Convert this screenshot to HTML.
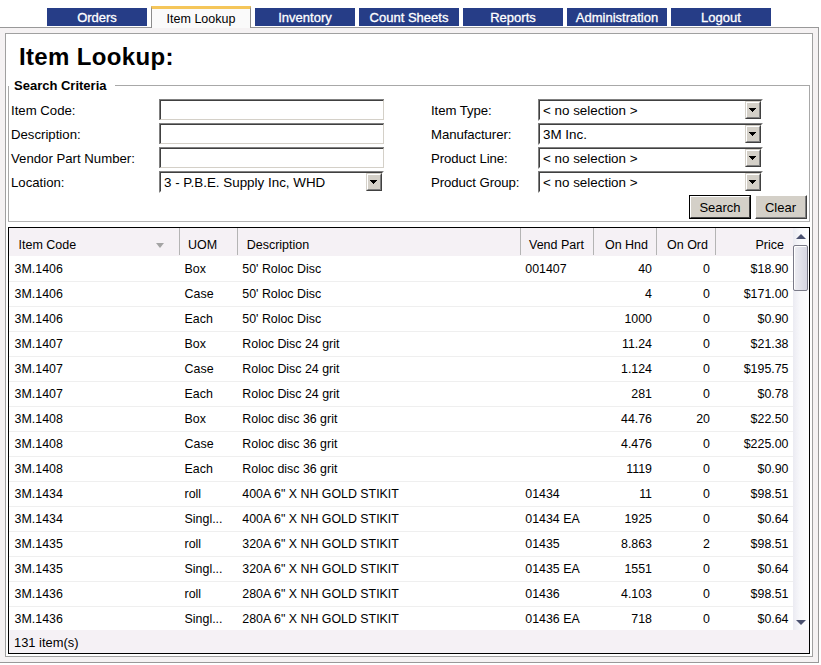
<!DOCTYPE html>
<html><head><meta charset="utf-8">
<style>
*{box-sizing:border-box;margin:0;padding:0}
html,body{width:821px;height:665px;overflow:hidden;background:#fff;font-family:"Liberation Sans",sans-serif;color:#000}
.a{position:absolute}
.tab{position:absolute;top:8px;width:100px;height:18px;background:#263d87;color:#fff;font-size:13px;line-height:20px;text-align:center;-webkit-text-stroke:0.3px #fff}
.atab{position:absolute;left:151px;top:6px;width:100px;height:22px;border-left:1px solid #8c8c8c;border-right:1px solid #8c8c8c;border-top:3px solid #f5c65a;background:#fafafa;font-size:12.5px;text-align:center;line-height:21px}
#outer{position:absolute;left:-1px;top:27px;width:820px;height:636px;border:1px solid #999;background:#f5f2f3}
#panel{position:absolute;left:5px;top:33px;width:808px;height:624px;border:1px solid #a0a0a0;background:#fff}
.lbl{position:absolute;font-size:13.2px;line-height:15px;white-space:nowrap}
.inp{position:absolute;width:225px;height:21px;border-top:2px solid #404040;border-left:2px solid #404040;border-right:1px solid #d4d0c8;border-bottom:1px solid #d4d0c8;background:#fff}
.inp:after{content:"";position:absolute;left:-2px;top:-2px;width:225px;height:1px;background:#808080}
.inp:before{content:"";position:absolute;left:-2px;top:-2px;width:1px;height:21px;background:#808080}
.sel{position:absolute;width:225px;height:22px;border-top:2px solid #404040;border-left:2px solid #404040;border-right:2px solid #fff;border-bottom:2px solid #fff;background:#fff}
.sel:after{content:"";position:absolute;left:-2px;top:-2px;right:-2px;bottom:-2px;border-top:1px solid #808080;border-left:1px solid #808080;border-right:1px solid #fff;border-bottom:1px solid #fff}
.sel .t{position:absolute;left:3px;top:2px;font-size:13.4px;line-height:16px;white-space:nowrap}
.sel .b{position:absolute;right:0;top:0;width:16px;height:18px;background:#d4d0c8;border-top:1px solid #d4d0c8;border-left:1px solid #d4d0c8;border-right:1px solid #404040;border-bottom:1px solid #404040}
.sel .b:before{content:"";position:absolute;left:0;top:0;right:0;bottom:0;border-top:1px solid #fff;border-left:1px solid #fff;border-right:1px solid #808080;border-bottom:1px solid #808080}
.sel .b svg{position:absolute;left:3px;top:6px}
.btn{position:absolute;background:#d4d0c8;font-size:13px;text-align:center}
.bi{position:absolute;left:0;top:0;right:0;bottom:0;border-top:1px solid #fff;border-left:1px solid #fff;border-right:1px solid #404040;border-bottom:1px solid #404040}
.bi2{position:absolute;left:0;top:0;right:0;bottom:0;border-right:1px solid #808080;border-bottom:1px solid #808080}
#grid{position:absolute;left:8px;top:227px;width:802px;height:427px;border:1px solid #000;background:#fff;overflow:hidden}
.hd{position:absolute;top:0;height:28px;background:#f5f1f5;left:0;width:785px}
.hc{position:absolute;top:4px;height:27px;font-size:12.5px;line-height:27px;white-space:nowrap}
.sep{position:absolute;top:0;height:27px;width:1px;background:#b4b4b4}
.row{position:absolute;left:0;width:785px;height:25px;border-bottom:1px solid #efefef}
.c{position:absolute;top:0;font-size:12.4px;line-height:25px;white-space:nowrap}
.r{text-align:right}
</style></head><body>
<div class="tab" style="left:47px">Orders</div>
<div class="tab" style="left:255px">Inventory</div>
<div class="tab" style="left:359px">Count Sheets</div>
<div class="tab" style="left:463px">Reports</div>
<div class="tab" style="left:567px">Administration</div>
<div class="tab" style="left:671px">Logout</div>
<div id="outer"></div>
<div class="atab">Item Lookup</div>
<div id="panel"></div>

<div class="a" style="left:19px;top:42px;font-size:24px;font-weight:bold;line-height:30px;letter-spacing:0.35px">Item Lookup:</div>

<!-- fieldset -->
<div class="a" style="left:8px;top:86px;width:1px;height:136px;background:#a8a8a8"></div>
<div class="a" style="left:115px;top:85px;width:695px;height:1px;background:#a8a8a8"></div>
<div class="a" style="left:809px;top:85px;width:1px;height:137px;background:#a8a8a8"></div>
<div class="a" style="left:8px;top:221px;width:802px;height:1px;background:#b4b4b4"></div>
<div class="a" style="left:14px;top:78px;font-size:13px;font-weight:bold;line-height:15px">Search Criteria</div>

<div class="lbl" style="left:11px;top:102.5px">Item Code:</div>
<div class="lbl" style="left:11px;top:126.5px">Description:</div>
<div class="lbl" style="left:11px;top:150.5px">Vendor Part Number:</div>
<div class="lbl" style="left:11px;top:174.5px">Location:</div>

<div class="inp" style="left:159px;top:99px"></div>
<div class="inp" style="left:159px;top:123px"></div>
<div class="inp" style="left:159px;top:147px"></div>
<div class="sel" style="left:159px;top:171px"><div class="t">3 - P.B.E. Supply Inc, WHD</div><div class="b"><svg width="7" height="4" shape-rendering="crispEdges"><path d="M0 0h7v1h-1v1h-1v1h-1v1h-1v-1h-1v-1h-1v-1h-1z" fill="#000"/></svg></div></div>

<div class="lbl" style="letter-spacing:-0.08px;left:431px;top:102.5px">Item Type:</div>
<div class="lbl" style="letter-spacing:-0.08px;left:431px;top:126.5px">Manufacturer:</div>
<div class="lbl" style="letter-spacing:-0.08px;left:431px;top:150.5px">Product Line:</div>
<div class="lbl" style="letter-spacing:-0.08px;left:431px;top:174.5px">Product Group:</div>

<div class="sel" style="left:538px;top:99px"><div class="t">&lt; no selection &gt;</div><div class="b"><svg width="7" height="4" shape-rendering="crispEdges"><path d="M0 0h7v1h-1v1h-1v1h-1v1h-1v-1h-1v-1h-1v-1h-1z" fill="#000"/></svg></div></div>
<div class="sel" style="left:538px;top:123px"><div class="t">3M Inc.</div><div class="b"><svg width="7" height="4" shape-rendering="crispEdges"><path d="M0 0h7v1h-1v1h-1v1h-1v1h-1v-1h-1v-1h-1v-1h-1z" fill="#000"/></svg></div></div>
<div class="sel" style="left:538px;top:147px"><div class="t">&lt; no selection &gt;</div><div class="b"><svg width="7" height="4" shape-rendering="crispEdges"><path d="M0 0h7v1h-1v1h-1v1h-1v1h-1v-1h-1v-1h-1v-1h-1z" fill="#000"/></svg></div></div>
<div class="sel" style="left:538px;top:171px"><div class="t">&lt; no selection &gt;</div><div class="b"><svg width="7" height="4" shape-rendering="crispEdges"><path d="M0 0h7v1h-1v1h-1v1h-1v1h-1v-1h-1v-1h-1v-1h-1z" fill="#000"/></svg></div></div>

<div class="btn" style="left:689px;top:195px;width:62px;height:24px;border:1px solid #000"><div class="bi" style="line-height:22px">Search</div></div>
<div class="btn" style="left:755px;top:195px;width:52px;height:24px;border-top:1px solid #fff;border-left:1px solid #fff;border-right:1px solid #404040;border-bottom:1px solid #404040"><div class="bi2" style="line-height:24px">Clear</div></div>

<div id="grid">
<div class="hd"></div>
<div class="sep" style="left:170px"></div>
<div class="sep" style="left:228px"></div>
<div class="sep" style="left:511px"></div>
<div class="sep" style="left:584px"></div>
<div class="sep" style="left:647px"></div>
<div class="sep" style="left:706px"></div>
<div class="hc" style="left:9.5px">Item Code</div>
<div class="hc" style="left:179px">UOM</div>
<div class="hc" style="left:237.7px">Description</div>
<div class="hc" style="left:520px">Vend Part</div>
<div class="hc r" style="right:161px">On Hnd</div>
<div class="hc r" style="right:101px">On Ord</div>
<div class="hc r" style="right:25px">Price</div>
<div class="a" style="left:147px;top:15px;width:0;height:0;border-left:4.5px solid transparent;border-right:4.5px solid transparent;border-top:5px solid #a4a4a4"></div>
<div class="row" style="top:29px"><div class="c" style="left:5.6px">3M.1406</div><div class="c" style="left:175.6px">Box</div><div class="c" style="left:233.3px">50' Roloc Disc</div><div class="c" style="left:516.3px">001407</div><div class="c r" style="right:142px">40</div><div class="c r" style="right:84px">0</div><div class="c r" style="right:5.5px">$18.90</div></div>
<div class="row" style="top:54px"><div class="c" style="left:5.6px">3M.1406</div><div class="c" style="left:175.6px">Case</div><div class="c" style="left:233.3px">50' Roloc Disc</div><div class="c r" style="right:142px">4</div><div class="c r" style="right:84px">0</div><div class="c r" style="right:5.5px">$171.00</div></div>
<div class="row" style="top:79px"><div class="c" style="left:5.6px">3M.1406</div><div class="c" style="left:175.6px">Each</div><div class="c" style="left:233.3px">50' Roloc Disc</div><div class="c r" style="right:142px">1000</div><div class="c r" style="right:84px">0</div><div class="c r" style="right:5.5px">$0.90</div></div>
<div class="row" style="top:104px"><div class="c" style="left:5.6px">3M.1407</div><div class="c" style="left:175.6px">Box</div><div class="c" style="left:233.3px">Roloc Disc 24 grit</div><div class="c r" style="right:142px">11.24</div><div class="c r" style="right:84px">0</div><div class="c r" style="right:5.5px">$21.38</div></div>
<div class="row" style="top:129px"><div class="c" style="left:5.6px">3M.1407</div><div class="c" style="left:175.6px">Case</div><div class="c" style="left:233.3px">Roloc Disc 24 grit</div><div class="c r" style="right:142px">1.124</div><div class="c r" style="right:84px">0</div><div class="c r" style="right:5.5px">$195.75</div></div>
<div class="row" style="top:154px"><div class="c" style="left:5.6px">3M.1407</div><div class="c" style="left:175.6px">Each</div><div class="c" style="left:233.3px">Roloc Disc 24 grit</div><div class="c r" style="right:142px">281</div><div class="c r" style="right:84px">0</div><div class="c r" style="right:5.5px">$0.78</div></div>
<div class="row" style="top:179px"><div class="c" style="left:5.6px">3M.1408</div><div class="c" style="left:175.6px">Box</div><div class="c" style="left:233.3px">Roloc disc 36 grit</div><div class="c r" style="right:142px">44.76</div><div class="c r" style="right:84px">20</div><div class="c r" style="right:5.5px">$22.50</div></div>
<div class="row" style="top:204px"><div class="c" style="left:5.6px">3M.1408</div><div class="c" style="left:175.6px">Case</div><div class="c" style="left:233.3px">Roloc disc 36 grit</div><div class="c r" style="right:142px">4.476</div><div class="c r" style="right:84px">0</div><div class="c r" style="right:5.5px">$225.00</div></div>
<div class="row" style="top:229px"><div class="c" style="left:5.6px">3M.1408</div><div class="c" style="left:175.6px">Each</div><div class="c" style="left:233.3px">Roloc disc 36 grit</div><div class="c r" style="right:142px">1119</div><div class="c r" style="right:84px">0</div><div class="c r" style="right:5.5px">$0.90</div></div>
<div class="row" style="top:254px"><div class="c" style="left:5.6px">3M.1434</div><div class="c" style="left:175.6px">roll</div><div class="c" style="left:233.3px">400A 6&quot; X NH GOLD STIKIT</div><div class="c" style="left:516.3px">01434</div><div class="c r" style="right:142px">11</div><div class="c r" style="right:84px">0</div><div class="c r" style="right:5.5px">$98.51</div></div>
<div class="row" style="top:279px"><div class="c" style="left:5.6px">3M.1434</div><div class="c" style="left:175.6px">Singl...</div><div class="c" style="left:233.3px">400A 6&quot; X NH GOLD STIKIT</div><div class="c" style="left:516.3px">01434 EA</div><div class="c r" style="right:142px">1925</div><div class="c r" style="right:84px">0</div><div class="c r" style="right:5.5px">$0.64</div></div>
<div class="row" style="top:304px"><div class="c" style="left:5.6px">3M.1435</div><div class="c" style="left:175.6px">roll</div><div class="c" style="left:233.3px">320A 6&quot; X NH GOLD STIKIT</div><div class="c" style="left:516.3px">01435</div><div class="c r" style="right:142px">8.863</div><div class="c r" style="right:84px">2</div><div class="c r" style="right:5.5px">$98.51</div></div>
<div class="row" style="top:329px"><div class="c" style="left:5.6px">3M.1435</div><div class="c" style="left:175.6px">Singl...</div><div class="c" style="left:233.3px">320A 6&quot; X NH GOLD STIKIT</div><div class="c" style="left:516.3px">01435 EA</div><div class="c r" style="right:142px">1551</div><div class="c r" style="right:84px">0</div><div class="c r" style="right:5.5px">$0.64</div></div>
<div class="row" style="top:354px"><div class="c" style="left:5.6px">3M.1436</div><div class="c" style="left:175.6px">roll</div><div class="c" style="left:233.3px">280A 6&quot; X NH GOLD STIKIT</div><div class="c" style="left:516.3px">01436</div><div class="c r" style="right:142px">4.103</div><div class="c r" style="right:84px">0</div><div class="c r" style="right:5.5px">$98.51</div></div>
<div class="row" style="top:379px"><div class="c" style="left:5.6px">3M.1436</div><div class="c" style="left:175.6px">Singl...</div><div class="c" style="left:233.3px">280A 6&quot; X NH GOLD STIKIT</div><div class="c" style="left:516.3px">01436 EA</div><div class="c r" style="right:142px">718</div><div class="c r" style="right:84px">0</div><div class="c r" style="right:5.5px">$0.64</div></div>
<div class="a" style="left:0;top:402px;width:800px;height:23px;background:#f5f1f5"></div>
<div class="c" style="left:5px;top:403px;line-height:23px;font-size:12.9px">131 item(s)</div>
<div class="a" style="left:784px;top:0;width:16px;height:402px;background:linear-gradient(90deg,#ebebf2,#f8f8fb 45%,#fdfdfe)"></div>
<div class="a" style="left:787px;top:6px;width:0;height:0;border-left:5px solid transparent;border-right:5px solid transparent;border-bottom:5px solid #4b5170"></div>
<div class="a" style="left:784px;top:17px;width:15px;height:46px;border:1px solid #7a7a88;border-radius:2px;background:linear-gradient(90deg,#eeeef3,#d6d6e2);box-shadow:inset 1px 1px 0 #fff"></div>
<div class="a" style="left:787px;top:392px;width:0;height:0;border-left:5px solid transparent;border-right:5px solid transparent;border-top:5px solid #4b5170"></div>
</div>
</body></html>
